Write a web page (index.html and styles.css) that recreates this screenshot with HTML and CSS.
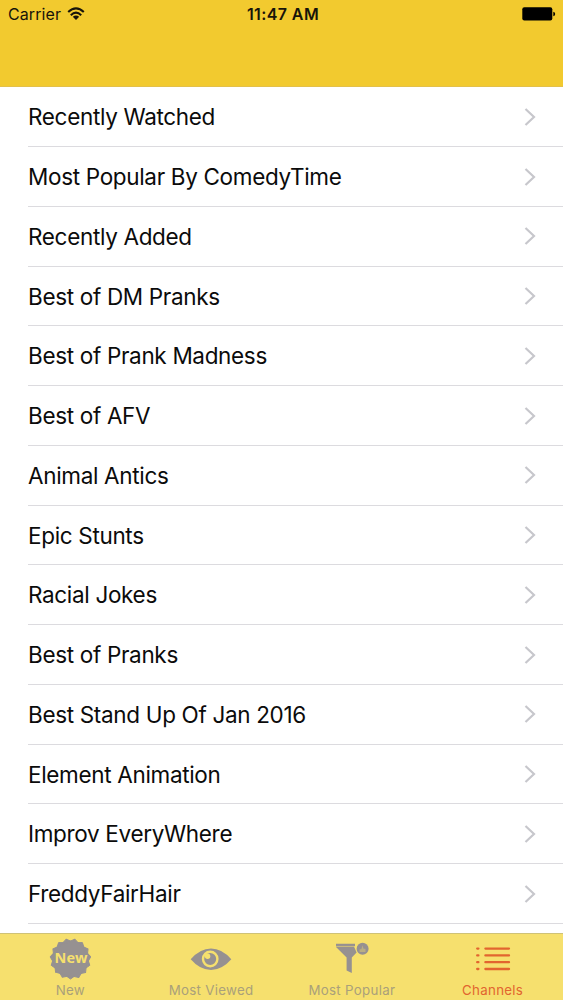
FILE: index.html
```html
<!DOCTYPE html>
<html lang="en">
<head>
    <meta charset="UTF-8">
    <meta name="viewport" content="width=device-width, initial-scale=1.0">
    <title>Channels</title>
    <link rel="stylesheet" href="styles.css">
</head>
<body>
    <svg class="defs" width="0" height="0">
        <symbol id="chevron" viewBox="0 0 12 20">
            <path d="M1.5 2 L10 10 L1.5 18" fill="none" stroke="#c7c7cc" stroke-width="2.2"/>
        </symbol>
    </svg>
    <header class="nav-bar">
        <div class="status-bar">
            <div class="carrier">
                <span>Carrier</span>
                <svg class="wifi" viewBox="0 0 18 13" width="18" height="13">
                    <g fill="none" stroke="#17140a" stroke-width="2.1">
                        <path d="M1.2 5 Q9 -2.2 16.8 5"/>
                        <path d="M3.8 8.2 Q9 3.2 14.2 8.2"/>
                    </g>
                    <path d="M5.8 9.8 Q9 7 12.2 9.8 L9 13Z" fill="#17140a"/>
                </svg>
            </div>
            <div class="time">11:47 AM</div>
            <svg class="battery" viewBox="0 0 34 14" width="34" height="14">
                <rect x="0.3" y="0.3" width="30" height="13.2" rx="2" fill="#000"/>
                <path d="M31.3 4.7 Q33.2 5 33.2 7 Q33.2 9 31.3 9.3Z" fill="#000"/>
            </svg>
        </div>
    </header>
    <ul class="channel-list">
        <li><span>Recently Watched</span><svg class="chevron"><use href="#chevron"/></svg></li>
        <li><span>Most Popular By ComedyTime</span><svg class="chevron"><use href="#chevron"/></svg></li>
        <li><span>Recently Added</span><svg class="chevron"><use href="#chevron"/></svg></li>
        <li><span>Best of DM Pranks</span><svg class="chevron"><use href="#chevron"/></svg></li>
        <li><span>Best of Prank Madness</span><svg class="chevron"><use href="#chevron"/></svg></li>
        <li><span>Best of AFV</span><svg class="chevron"><use href="#chevron"/></svg></li>
        <li><span>Animal Antics</span><svg class="chevron"><use href="#chevron"/></svg></li>
        <li><span>Epic Stunts</span><svg class="chevron"><use href="#chevron"/></svg></li>
        <li><span>Racial Jokes</span><svg class="chevron"><use href="#chevron"/></svg></li>
        <li><span>Best of Pranks</span><svg class="chevron"><use href="#chevron"/></svg></li>
        <li><span>Best Stand Up Of Jan 2016</span><svg class="chevron"><use href="#chevron"/></svg></li>
        <li><span>Element Animation</span><svg class="chevron"><use href="#chevron"/></svg></li>
        <li><span>Improv EveryWhere</span><svg class="chevron"><use href="#chevron"/></svg></li>
        <li><span>FreddyFairHair</span><svg class="chevron"><use href="#chevron"/></svg></li>
    </ul>
    <nav class="tab-bar">
        <a class="tab">
            <svg viewBox="0 0 42 42" width="42" height="42">
                <!-- three pentagons, 24 degrees apart, give fifteen teeth -->
                <g fill="currentColor" stroke="currentColor" stroke-width="1" stroke-linejoin="round">
                    <path id="teeth" d="M21.5 41 L2.2 27.3 L9.6 4.6 H33.4 L40.8 27.3Z"/>
                    <use href="#teeth" transform="rotate(24 21.5 21)"/>
                    <use href="#teeth" transform="rotate(48 21.5 21)"/>
                </g>
                <text class="badge-text" x="22" y="24.8" text-anchor="middle">New</text>
            </svg>
            <span>New</span>
        </a>
        <a class="tab">
            <svg viewBox="0 0 42 42" width="42" height="42">
                <path d="M.7 21.3 Q10 10.5 21 10.5 T41.3 21.3 Q32 32 21 32 T.7 21.3Z" fill="currentColor"/>
                <circle cx="20.2" cy="21" r="7.2" fill="none" stroke="#f6e06e" stroke-width="2.4"/>
                <circle cx="20.2" cy="21" r="4.9" fill="currentColor"/>
                <circle cx="17.6" cy="18.3" r="2.7" fill="#f6e06e"/>
            </svg>
            <span>Most Viewed</span>
        </a>
        <a class="tab">
            <svg viewBox="0 0 42 42" width="42" height="42">
                <path d="M5 5.8 H24 V7.9 H5Z M5 9 H23.2 L25.6 14.5 L20.8 19.4 V35 L15.6 32.4 V19.4Z" fill="currentColor"/>
                <path d="M5 8.4H23.5" stroke="#c3b680" stroke-width="1"/>
                <circle cx="31.6" cy="10.8" r="6" fill="currentColor"/>
                <path d="M28.6 14 V11.3 H30.3 L31.6 7.3 L32.5 10.8 H34.5 V14Z" fill="#b9ae84"/>
            </svg>
            <span>Most Popular</span>
        </a>
        <a class="tab active">
            <svg viewBox="0 0 42 42" width="42" height="42">
                <g stroke="currentColor" stroke-width="2.3" stroke-linecap="round">
                    <path d="M5.2 10.6H6.4M5.2 17.4H6.4M5.2 24.2H6.4M5.2 31H6.4"/>
                    <path d="M13.4 10.6H37M13.4 17.4H37M13.4 24.2H37M13.4 31H37"/>
                </g>
            </svg>
            <span>Channels</span>
        </a>
    </nav>
</body>
</html>
```

FILE: styles.css
```css
* {
    box-sizing: border-box;
}
body {
    margin: 0;
    height: 1000px;
    display: flex;
    flex-direction: column;
    overflow: hidden;
    background: #fff;
    color: #0b0b0b;
    font-family: Inter, "Liberation Sans", sans-serif;
}
.defs {
    display: none;
}
.nav-bar {
    height: 87.4px;
    flex: none;
    background: #f2ca2f;
    border-bottom: 1px solid #e3c04a;
}
.status-bar {
    display: grid;
    grid-template-columns: 1fr auto 1fr;
    align-items: center;
    height: 28px;
    padding: 0 7px 0 8px;
    color: #17140a;
    font-size: 16px;
}
.carrier {
    display: flex;
    align-items: center;
    gap: 6px;
    letter-spacing: 0.1px;
}
.wifi {
    margin-top: -2px;
}
.time {
    padding-left: 2px;
    font-weight: 600;
    letter-spacing: 0.4px;
}
.battery {
    justify-self: end;
}
.channel-list {
    list-style: none;
    margin: 0;
    padding: 0 0 0 28px;
    flex: 1;
}
.channel-list li {
    display: flex;
    align-items: center;
    justify-content: space-between;
    height: 59.75px;
    padding-right: 27px;
    border-bottom: 1px solid #dcdbdf;
    font-size: 22.5px;
    letter-spacing: -0.33px;
}
.chevron {
    width: 12px;
    height: 20px;
}
.tab-bar {
    display: flex;
    height: 67px;
    flex: none;
    background: #f6e06e;
    border-top: 1px solid #cfc277;
}
.tab {
    flex: 1;
    display: flex;
    flex-direction: column;
    align-items: center;
    padding-top: 4px;
    color: #969191;
    font-size: 13.3px;
    line-height: 16px;
    letter-spacing: 0.3px;
}
.tab span {
    margin-top: 2px;
    color: #aaa07a;
}
.tab.active,
.tab.active span {
    color: #e2652f;
}
.badge-text {
    fill: #f6e06e;
    font-family: "Open Sans", "Noto Sans", sans-serif;
    font-size: 14.5px;
    font-weight: 700;
    letter-spacing: 0;
}
```
